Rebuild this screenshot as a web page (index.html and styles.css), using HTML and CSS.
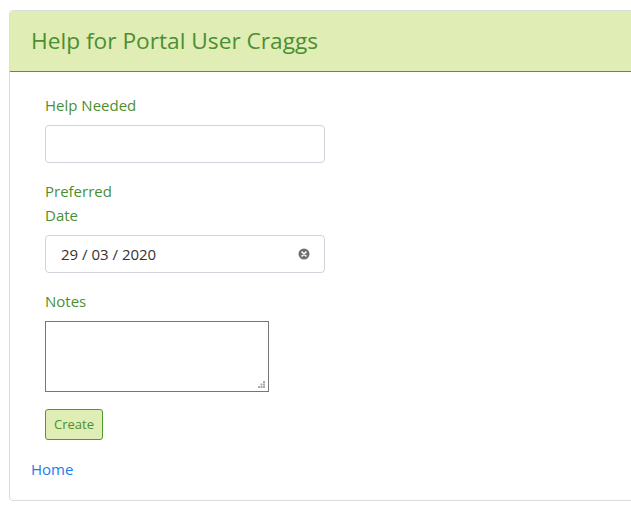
FILE: index.html
```html
<!DOCTYPE html>
<html>
<head>
<meta charset="utf-8">
<link rel="stylesheet" href="styles.css">
</head>
<body>
<div class="card">
  <div class="card-header">Help for Portal User Craggs</div>
  <div class="card-body">
    <form class="form">
      <div class="field">
        <label class="label">Help Needed</label>
        <input class="input" type="text">
      </div>
      <div class="field">
        <label class="label label-narrow">Preferred Date</label>
        <div class="input date-input">
          <span class="date-text">29 / 03 / 2020</span>
          <svg class="clear" width="12" height="12" viewBox="0 0 12 12"><circle cx="6" cy="6" r="5.5" fill="#6f6f6f"/><path d="M4 4L8 8M8 4L4 8" stroke="#fff" stroke-width="1.6" stroke-linecap="round"/></svg>
        </div>
      </div>
      <div class="field field-notes">
        <label class="label">Notes</label>
        <div class="notes-wrap">
          <textarea class="notes"></textarea>
          <svg class="grip" width="7" height="7" viewBox="0 0 7 7"><rect x="5" y="0" width="2" height="2" fill="#aaa"/><rect x="2.5" y="2.5" width="2" height="2" fill="#aaa"/><rect x="5" y="2.5" width="2" height="2" fill="#aaa"/><rect x="0" y="5" width="2" height="2" fill="#aaa"/><rect x="2.5" y="5" width="2" height="2" fill="#aaa"/><rect x="5" y="5" width="2" height="2" fill="#aaa"/></svg>
        </div>
      </div>
      <button class="btn" type="button">Create</button>
    </form>
    <a class="home" href="#">Home</a>
  </div>
</div>
</body>
</html>
```
FILE: styles.css
```css
html, body { margin: 0; padding: 0; overflow: hidden; background: #fff; }
body { font-family: "Open Sans", "Noto Sans", sans-serif; font-size: 15px; color: #212529; }
.card {
  margin: 10px 0 0 9px;
  width: 700px;
  border: 1px solid #dcdcdc;
  border-radius: 4px;
  overflow: hidden;
}
.card-header {
  background: #e0edb4;
  border-bottom: 1px solid #4e9a2e;
  color: #4b8f33;
  font-size: 22.7px;
  line-height: 34px;
  padding: 13px 21px 13px;
}
.card-body { padding: 21px 0 19px 21px; }
.form { padding-left: 14px; }
.field { margin-bottom: 16px; display: flex; flex-direction: column; align-items: flex-start; }
.label { color: #4b8f33; line-height: 24px; margin-bottom: 8px; }
.label-narrow { width: 70px; }
.input {
  box-sizing: border-box;
  width: 280px;
  height: 38px;
  border: 1px solid #ced4da;
  border-radius: 4px;
  background: #fff;
  font: inherit;
  padding: 0 12px;
}
.date-input { display: flex; align-items: center; justify-content: space-between; padding: 0 14px 0 15px; color: #333; font-size: 15px; }
.date-text { word-spacing: 0; }
.clear { display: block; margin-top: -1px; }
.notes-wrap { position: relative; width: 224px; height: 71px; }
.notes {
  box-sizing: border-box;
  width: 224px;
  height: 71px;
  border: 1px solid #767676;
  border-radius: 0;
  margin: 0;
  display: block;
  font: inherit;
  resize: none;
}
.grip { position: absolute; right: 4px; bottom: 4px; }
.field-notes { margin-bottom: 17px; }
.btn {
  display: block;
  font-family: inherit;
  font-size: 13px;
  color: #4b8f33;
  background: #e0edb4;
  border: 1px solid #4e9a2e;
  border-radius: 3px;
  height: 31px;
  padding: 0 8px;
  line-height: 29px;
}
.home {
  display: block;
  margin-top: 17px;
  color: #1a7cf0;
  text-decoration: none;
  line-height: 24px;
}
```
